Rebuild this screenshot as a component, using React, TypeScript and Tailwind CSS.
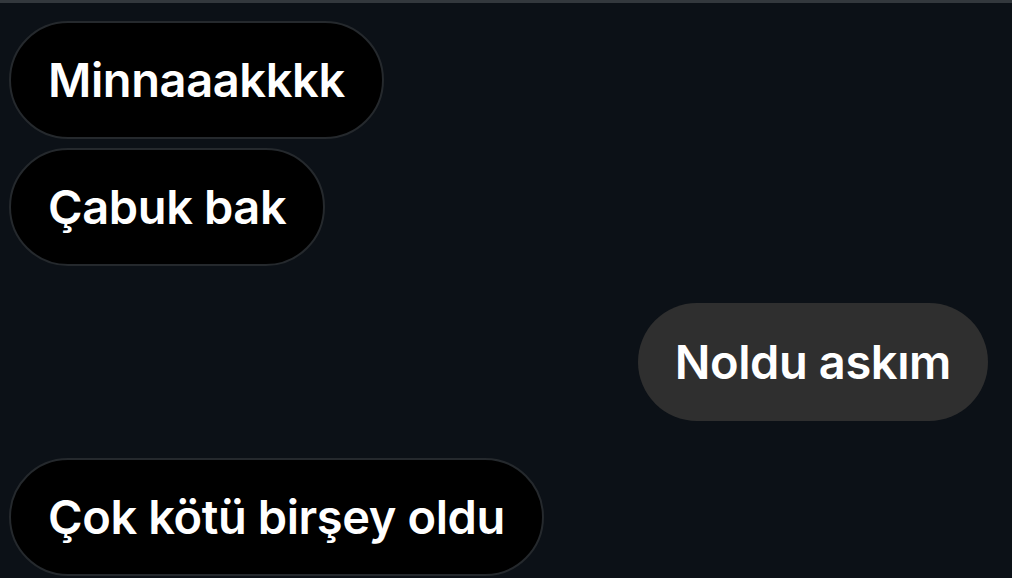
import React from 'react';

type Msg = { text: string; mine?: boolean; gapTop?: boolean };

const messages: Msg[] = [
  { text: 'Minnaaakkkk' },
  { text: 'Çabuk bak' },
  { text: 'Noldu askım', mine: true, gapTop: true },
  { text: 'Çok kötü birşey oldu', gapTop: true },
];

const Bubble: React.FC<{ msg: Msg }> = ({ msg }) => (
  <div className={`flex ${msg.mine ? 'justify-end' : 'justify-start'} ${msg.gapTop ? 'mt-[28px]' : ''}`}>
    <div
      className={`h-[118px] flex items-center px-[37px] rounded-full text-white text-[47px] font-semibold tracking-[-0.4px] ${
        msg.mine ? 'bg-[#2f2f2f]' : 'bg-black border-2 border-[#25292d]'
      }`}
    >
      {msg.text}
    </div>
  </div>
);

export default function App() {
  return (
    <div
      className="w-[1012px] h-[578px] overflow-hidden bg-[#0c1117] border-t-[3px] border-[#33383d]"
      style={{ fontFamily: 'Inter, "Noto Sans", sans-serif' }}
    >
      <div className="flex flex-col gap-[9px] pl-[9px] pr-[24px] pt-[18px]">
        {messages.map((m, i) => (
          <Bubble key={i} msg={m} />
        ))}
      </div>
    </div>
  );
}
